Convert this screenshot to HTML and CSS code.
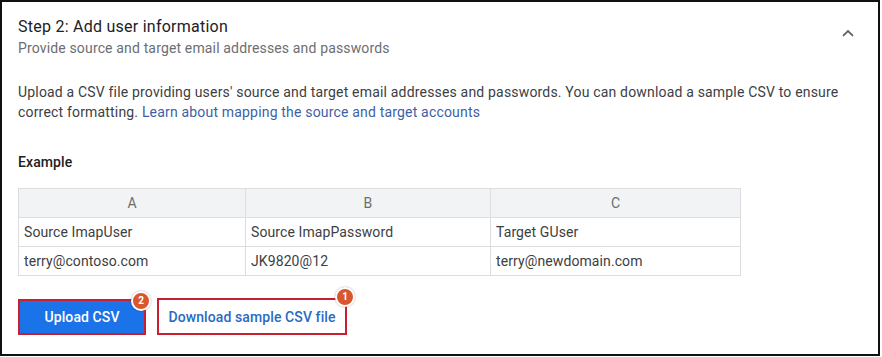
FILE: index.html
```html
<!DOCTYPE html>
<html lang="en">
<head>
<meta charset="utf-8">
<title>Step 2: Add user information</title>
<link rel="stylesheet" href="styles.css">
</head>
<body>
<div class="frame">
  <header class="step-header">
    <div class="step-titles">
      <div class="step-title">Step 2: Add user information</div>
      <div class="step-subtitle">Provide source and target email addresses and passwords</div>
    </div>
    <button class="collapse" aria-label="Collapse">
      <svg width="12" height="8" viewBox="0 0 12 8"><path d="M1 6.8 L6 2 L11 6.8" fill="none" stroke="#5f6368" stroke-width="1.8"/></svg>
    </button>
  </header>
  <section class="step-body">
    <p class="intro">Upload a CSV file providing users' source and target email addresses and passwords. You can download a sample CSV to ensure correct formatting. <a href="#" class="link">Learn about mapping the source and target accounts</a></p>
    <div class="example-label">Example</div>
    <table class="sheet">
      <colgroup>
        <col class="col-a"><col class="col-b"><col class="col-c">
      </colgroup>
      <thead>
        <tr><th>A</th><th>B</th><th>C</th></tr>
      </thead>
      <tbody>
        <tr><td>Source ImapUser</td><td>Source ImapPassword</td><td>Target GUser</td></tr>
        <tr><td>terry@contoso.com</td><td>JK9820@12</td><td>terry@newdomain.com</td></tr>
      </tbody>
    </table>
    <div class="actions">
      <div class="action">
        <button class="btn-primary">Upload CSV</button>
        <span class="badge">2</span>
      </div>
      <div class="action">
        <button class="btn-text">Download sample CSV file</button>
        <span class="badge badge-1">1</span>
      </div>
    </div>
  </section>
</div>
</body>
</html>
```
FILE: styles.css
```css
* { box-sizing: border-box; }
html, body { margin: 0; padding: 0; background: #fff; }
body {
  font-family: Roboto, "Liberation Sans", Arial, sans-serif;
  color: #3c4043;
  width: 882px;
  height: 357px;
  overflow: hidden;
}
.frame {
  width: 880px;
  height: 356px;
  border: 2px solid #111;
  background: #fff;
}
.step-header {
  display: flex;
  justify-content: space-between;
  align-items: flex-start;
  padding: 14px 24px 0 16px;
}
.step-title {
  font-size: 16px;
  line-height: 22px;
  color: #202124;
  letter-spacing: 0.25px;
}
.step-subtitle {
  font-size: 14px;
  line-height: 20px;
  color: #6b6e72;
  letter-spacing: 0.15px;
}
.collapse {
  border: 0;
  background: none;
  padding: 0;
  margin-top: 13px;
  width: 12px;
  height: 8px;
  display: flex;
}
.step-body {
  padding: 24px 16px 0 16px;
}
.intro {
  margin: 0;
  font-size: 14px;
  line-height: 20px;
  color: #3c4043;
  letter-spacing: 0.18px;
}
.link {
  color: #3d5fa6;
  text-decoration: none;
}
.example-label {
  margin-top: 30px;
  font-size: 14px;
  line-height: 20px;
  font-weight: 500;
  color: #202124;
  letter-spacing: 0.1px;
}
.sheet {
  margin-top: 16px;
  border-collapse: collapse;
  table-layout: fixed;
  width: 722px;
  font-size: 14px;
  letter-spacing: 0.1px;
}
.col-a { width: 227px; }
.col-b { width: 245px; }
.col-c { width: 250px; }
.sheet th, .sheet td {
  border: 1px solid #dcdde0;
  height: 29px;
  padding: 0 5px;
  white-space: nowrap;
}
.sheet th {
  background: #f1f3f4;
  font-weight: 400;
  color: #6b6e72;
  text-align: center;
}
.sheet td {
  color: #3c4043;
  text-align: left;
}
.actions {
  display: flex;
  gap: 11px;
  margin-top: 22px;
  align-items: flex-start;
}
.action {
  position: relative;
}
.btn-primary {
  width: 128px;
  height: 36px;
  margin-top: 1px;
  border: 2px solid #c9202f;
  background: #1a73e8;
  color: #fff;
  font-family: inherit;
  font-size: 14px;
  font-weight: 500;
  letter-spacing: 0.1px;
  padding: 0;
}
.btn-text {
  width: 190px;
  height: 37px;
  border: 2px solid #c9202f;
  background: #fff;
  color: #2a6ac2;
  font-family: inherit;
  font-size: 14px;
  font-weight: 500;
  letter-spacing: 0.1px;
  padding: 0;
}
.badge {
  position: absolute;
  top: -7px;
  right: -5px;
  width: 20px;
  height: 20px;
  border-radius: 50%;
  background: #d9572e;
  border: 2px solid #fff;
  box-shadow: 0 0 2px rgba(0,0,0,0.35);
  color: #fff;
  font-size: 10px;
  font-weight: 700;
  display: flex;
  align-items: center;
  justify-content: center;
  line-height: 1;
}
.badge-1 {
  top: -11px;
  right: -8px;
}
```
